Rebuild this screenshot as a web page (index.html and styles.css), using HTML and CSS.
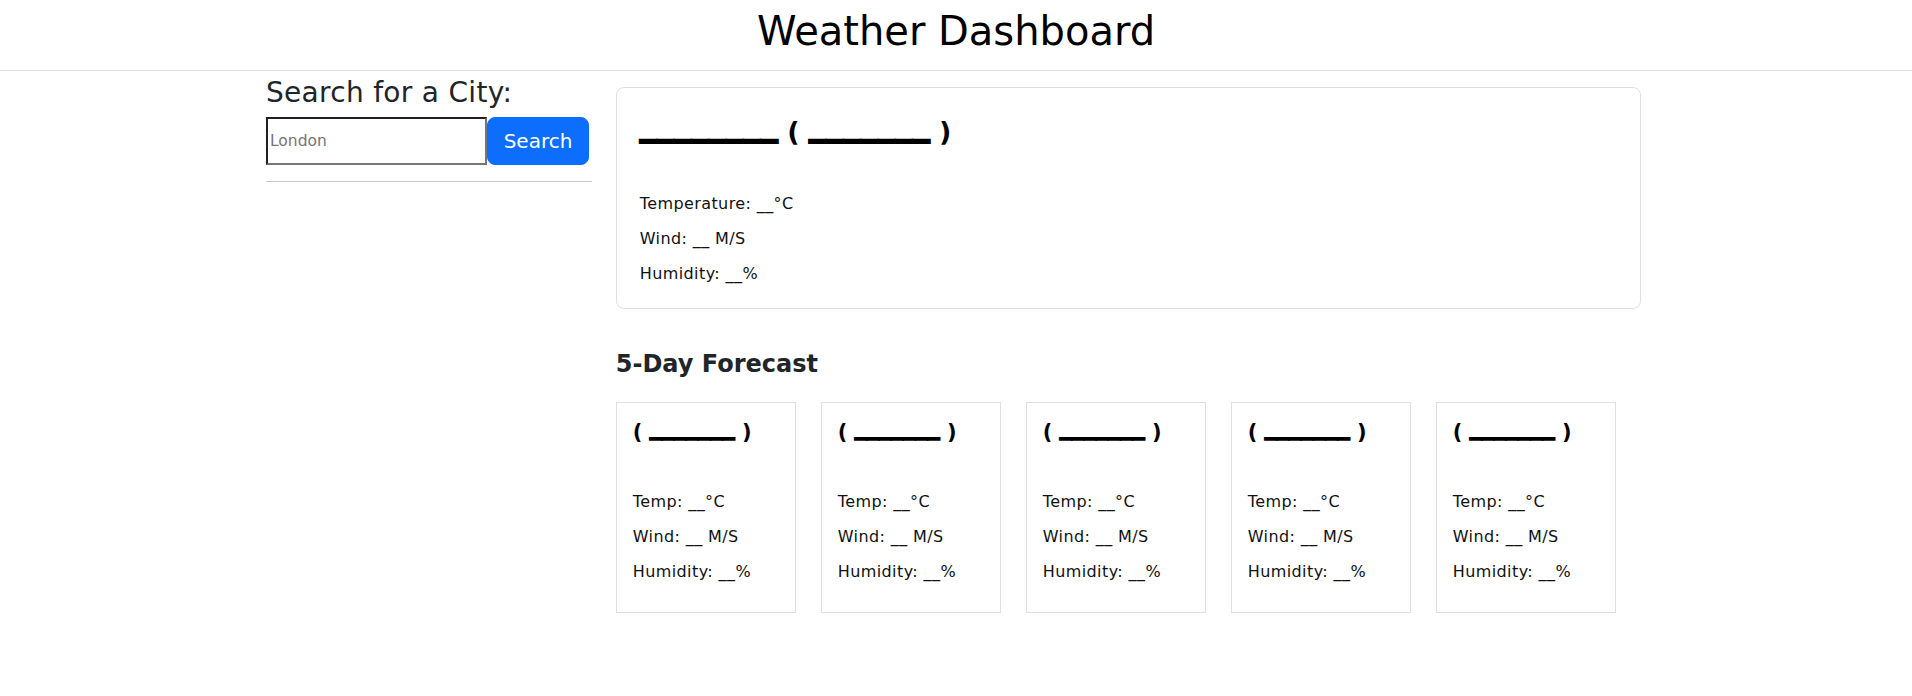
FILE: index.html
```html
<!DOCTYPE html>
<html lang="en">
<head>
<meta charset="utf-8">
<title>Weather Dashboard</title>
<link rel="stylesheet" href="styles.css">
</head>
<body>
<header class="topbar">
  <h1 class="app-title">Weather Dashboard</h1>
</header>
<main class="layout">
  <aside class="sidebar">
    <h3 class="search-title">Search for a City:</h3>
    <form class="search-form">
      <input class="search-input" type="text" placeholder="London">
      <button class="search-btn" type="button">Search</button>
    </form>
    <hr class="divider">
  </aside>
  <section class="content">
    <div class="current-card">
      <h2 class="current-title"><span class="blank">________</span> ( <span class="blank">_______</span> )</h2>
      <p class="stat">Temperature: __°C</p>
      <p class="stat">Wind: __ M/S</p>
      <p class="stat">Humidity: __%</p>
    </div>
    <h4 class="forecast-heading">5-Day Forecast</h4>
    <div class="forecast-row">
      <div class="forecast-card">
        <h5 class="forecast-title">( <span class="blank-sm">_______</span> )</h5>
        <p class="stat">Temp: __°C</p>
        <p class="stat">Wind: __ M/S</p>
        <p class="stat">Humidity: __%</p>
      </div>
      <div class="forecast-card">
        <h5 class="forecast-title">( <span class="blank-sm">_______</span> )</h5>
        <p class="stat">Temp: __°C</p>
        <p class="stat">Wind: __ M/S</p>
        <p class="stat">Humidity: __%</p>
      </div>
      <div class="forecast-card">
        <h5 class="forecast-title">( <span class="blank-sm">_______</span> )</h5>
        <p class="stat">Temp: __°C</p>
        <p class="stat">Wind: __ M/S</p>
        <p class="stat">Humidity: __%</p>
      </div>
      <div class="forecast-card">
        <h5 class="forecast-title">( <span class="blank-sm">_______</span> )</h5>
        <p class="stat">Temp: __°C</p>
        <p class="stat">Wind: __ M/S</p>
        <p class="stat">Humidity: __%</p>
      </div>
      <div class="forecast-card">
        <h5 class="forecast-title">( <span class="blank-sm">_______</span> )</h5>
        <p class="stat">Temp: __°C</p>
        <p class="stat">Wind: __ M/S</p>
        <p class="stat">Humidity: __%</p>
      </div>
    </div>
  </section>
</main>
</body>
</html>
```

FILE: styles.css
```css
* {
  box-sizing: border-box;
}

html, body {
  margin: 0;
  padding: 0;
  background: #ffffff;
}

body {
  font-family: "DejaVu Sans", Verdana, sans-serif;
  color: #212529;
  font-size: 16px;
}

.topbar {
  padding: 7px 0 15px;
  border-bottom: 1px solid #dee2e6;
  text-align: center;
}

.app-title {
  margin: 0;
  font-size: 40px;
  font-weight: 400;
  line-height: 48px;
  color: #000;
}

.layout {
  display: grid;
  grid-template-columns: 325.75px 1025.25px;
  column-gap: 24px;
  width: 1375px;
  margin-left: calc(50% - 690px);
  padding-top: 16px;
}

.sidebar {
  display: flex;
  flex-direction: column;
}

.search-title {
  margin: -11px 0 7px;
  font-size: 28px;
  font-weight: 400;
  line-height: 33.6px;
  letter-spacing: 0.3px;
  color: #212529;
}

.search-form {
  display: flex;
  margin: 0;
}

.search-input {
  width: 221px;
  height: 48px;
  margin: 0;
  padding: 0 2px;
  border-width: 2px;
  border-style: solid;
  border-color: #1f1f1f #767676 #767676 #1f1f1f;
  font-family: "DejaVu Sans", Verdana, sans-serif;
  font-size: 15.5px;
  color: #212529;
  background: #fff;
  outline: none;
}

.search-input::placeholder {
  color: #757575;
}

.search-btn {
  width: 102px;
  height: 48px;
  margin: 0;
  padding: 0;
  border: 1px solid #0d6efd;
  border-radius: 8px;
  background: #0d6efd;
  color: #fff;
  font-family: "DejaVu Sans", Verdana, sans-serif;
  font-size: 20px;
  line-height: 30px;
}

.divider {
  margin: 16px 0 0;
  border: 0;
  border-top: 1px solid #c8c9ca;
  width: 100%;
}

.content {
  display: flex;
  flex-direction: column;
}

.current-card {
  border: 1px solid #dfdfdf;
  border-radius: 8px;
  padding: 23px;
  height: 222px;
}

.current-title {
  margin: 6px 0 47px;
  font-size: 27px;
  font-weight: 700;
  line-height: 30px;
  color: #000;
}

.blank {
  font-size: 34.5px;
  line-height: 0;
  vertical-align: 6px;
  -webkit-text-stroke: 2px #000;
}

.blank-sm {
  font-size: 24.3px;
  line-height: 0;
  vertical-align: 5px;
  -webkit-text-stroke: 1.6px #000;
}

.stat {
  margin: 0 0 16px;
  font-size: 16px;
  line-height: 19px;
  letter-spacing: 0.4px;
  color: #111;
}

.stat:last-child {
  margin-bottom: 0;
}

.forecast-heading {
  margin: 41px 0 23px;
  font-size: 24px;
  font-weight: 700;
  line-height: 28.8px;
  color: #212529;
}

.forecast-row {
  display: flex;
  gap: 25px;
}

.forecast-card {
  width: 180px;
  height: 211px;
  border: 1px solid #dfdfdf;
  padding: 16px;
}

.forecast-title {
  margin: 1px 0 48px;
  font-size: 21px;
  font-weight: 700;
  line-height: 24px;
  color: #000;
}
```
